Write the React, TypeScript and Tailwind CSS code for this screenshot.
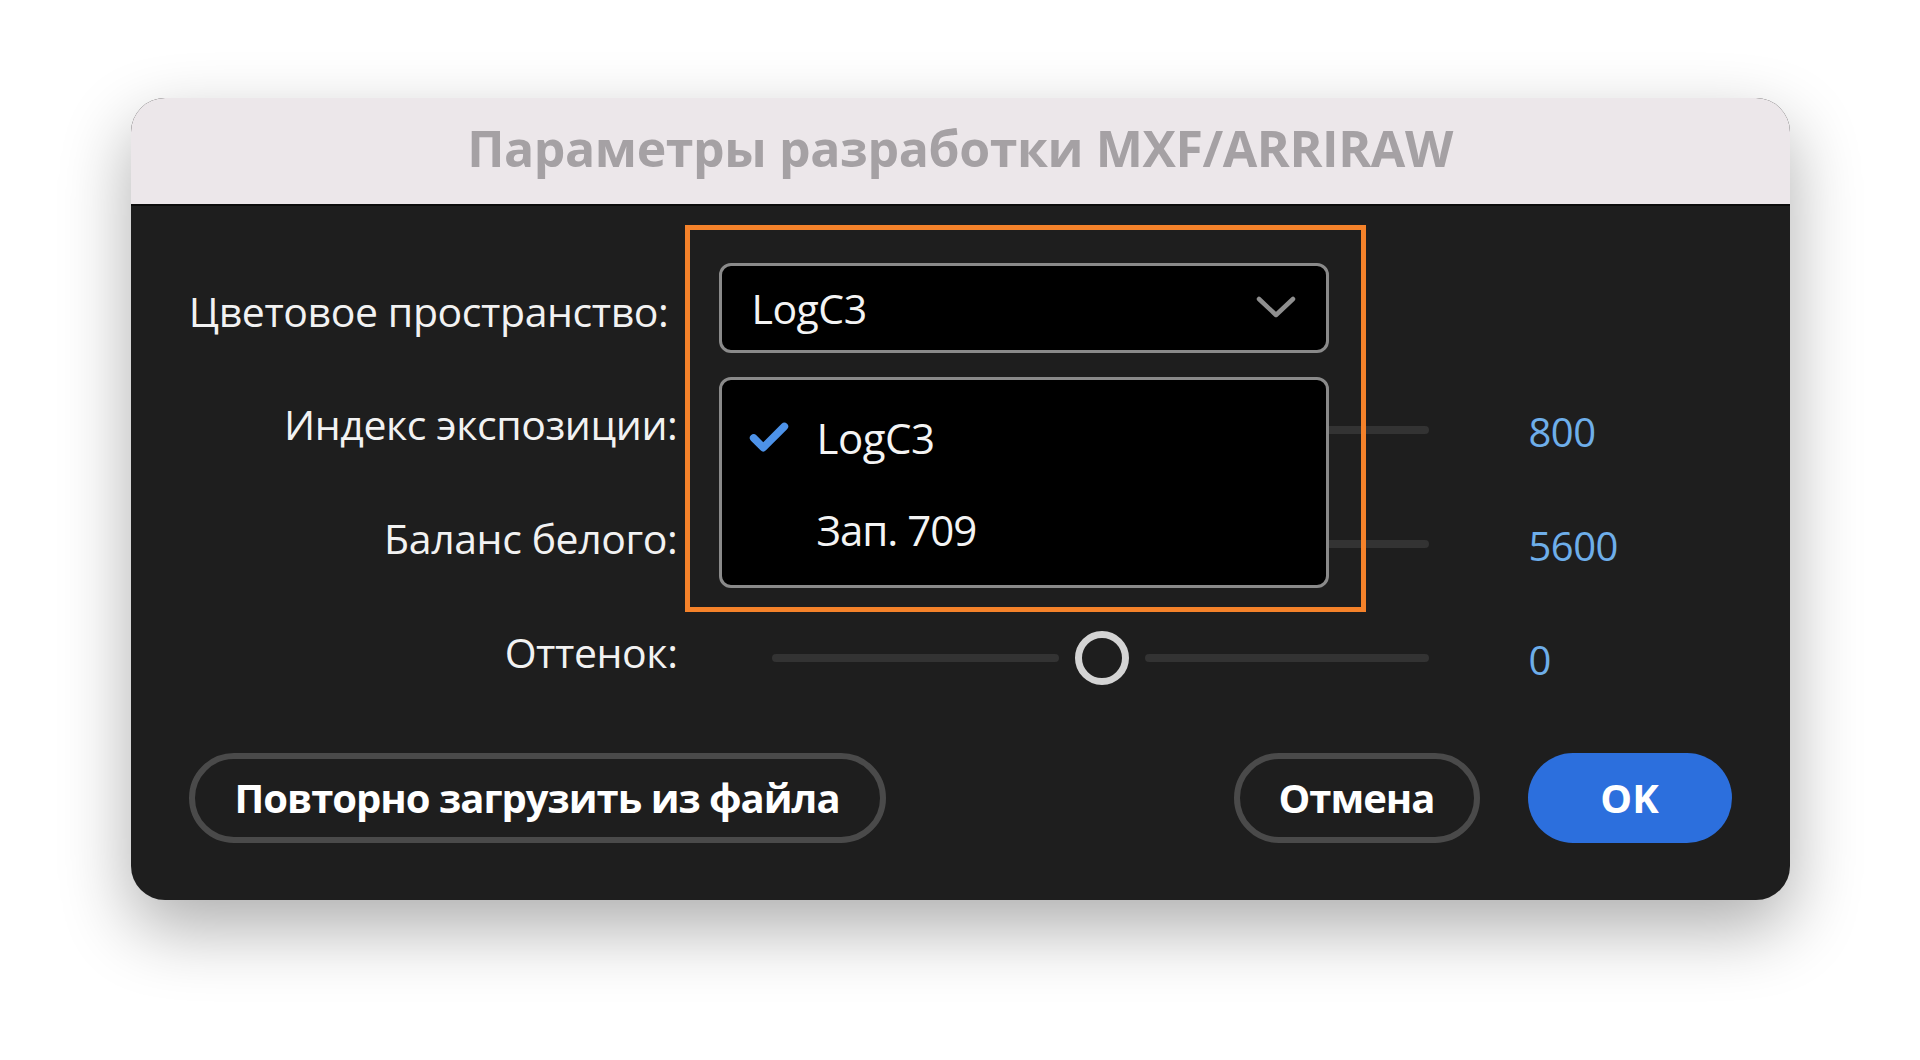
import { Check } from "lucide-react";

const font = { fontFamily: '"Open Sans", "Noto Sans", sans-serif' };

function Track({ thumb }: { thumb?: number }) {
  // thumb: px offset of the thumb centre from the track's left edge
  if (thumb === undefined) {
    return <div className="h-[8px] w-[657px] rounded-full bg-[#333333]" />;
  }
  return (
    <div className="flex w-[657px] items-center">
      <div className="h-[8px] rounded-full bg-[#333333]" style={{ width: thumb - 42 }} />
      <div className="mx-[16px] h-[54px] w-[54px] shrink-0 rounded-full border-[7px] border-[#d4d4d4] bg-[#1e1e1e]" />
      <div className="h-[8px] flex-1 rounded-full bg-[#333333]" />
    </div>
  );
}

function SliderRow({ label, value, thumb }: { label: string; value: string; thumb?: number }) {
  return (
    <div className="flex h-[114px] items-center">
      <div className="w-[489px] pb-[12px] text-right text-[41px] font-medium leading-none tracking-[-0.4px] text-[#f2f2f2]">
        {label}
      </div>
      <div className="ml-[94px]">
        <Track thumb={thumb} />
      </div>
      <div className="ml-[100px] pt-[4px] text-[40px] leading-none tracking-[-0.5px] text-[#6eaeea]">{value}</div>
    </div>
  );
}

export default function App() {
  const rows = [
    { label: "Индекс экспозиции:", value: "800" },
    { label: "Баланс белого:", value: "5600" },
    { label: "Оттенок:", value: "0", thumb: 329 },
  ];

  return (
    <div className="flex min-h-[1060px] w-full justify-center bg-white pt-[98px]" style={font}>
      <div className="h-[802px] w-[1659px] overflow-hidden rounded-[34px] bg-[#1e1e1e] shadow-[0_28px_70px_rgba(0,0,0,0.32)]">
        {/* title bar */}
        <div className="flex h-[108px] items-center justify-center border-b-2 border-[#0c0c0c] bg-[#ece7ea] pb-[6px]">
          <h1 className="text-[50px] font-bold leading-none tracking-[-0.4px] text-[#a5a1a4]">
            Параметры разработки MXF/ARRIRAW
          </h1>
        </div>

        <div className="px-[58px] pt-[57px] pb-[57px]">
          {/* colour space */}
          <div className="flex h-[90px] items-center">
            <div className="w-[489px] pr-[9px] pt-[6px] text-right text-[41px] font-medium leading-none tracking-[-0.4px] text-[#f2f2f2]">
              Цветовое пространство:
            </div>
            <div className="relative ml-[41px]">
              <div className="flex h-[90px] w-[610px] items-center justify-between rounded-[12px] border-[3px] border-[#8a8a8a] bg-black pl-[30px] pr-[30px]">
                <span className="text-[41px] leading-none tracking-[-0.5px] text-[#f4f4f4]">LogC3</span>
                <svg width="40" height="24" viewBox="0 0 40 24" fill="none">
                  <path d="M3 3 L20 19 L37 3" stroke="#8f8f8f" strokeWidth="4.5" strokeLinecap="round" strokeLinejoin="round" />
                </svg>
              </div>

              {/* open menu */}
              <div className="absolute left-0 top-[114px] z-10 flex h-[211px] w-[610px] flex-col rounded-[12px] border-[3px] border-[#8a8a8a] bg-black pt-[38px]">
                <div className="flex h-[40px] items-center">
                  <Check className="ml-[24px] h-[46px] w-[46px] text-[#4d92e8]" strokeWidth={4} />
                  <span className="ml-[25px] text-[42px] leading-none tracking-[-0.5px] text-[#f4f4f4]">LogC3</span>
                </div>
                <div className="mt-[52px] flex h-[40px] items-center">
                  <span className="ml-[95px] text-[42px] leading-none tracking-[-1px] text-[#f4f4f4]">Зап. 709</span>
                </div>
              </div>

              {/* highlight frame */}
              <div className="pointer-events-none absolute left-[-34px] top-[-38px] z-20 h-[387px] w-[681px] border-[5px] border-[#f5822a]" />
            </div>
          </div>

          <div className="mt-[20px]">
            {rows.map((r) => (
              <SliderRow key={r.label} label={r.label} value={r.value} thumb={r.thumb} />
            ))}
          </div>

          {/* buttons */}
          <div className="mt-[38px] flex items-center">
            <button className="flex h-[90px] w-[697px] items-center justify-center rounded-full border-[6px] border-[#4a4a4a] text-[40px] font-bold leading-none tracking-[-1px] text-white">
              Повторно загрузить из файла
            </button>
            <div className="ml-auto flex items-center gap-[48px]">
              <button className="flex h-[90px] w-[246px] items-center justify-center rounded-full border-[6px] border-[#4a4a4a] text-[40px] font-bold leading-none tracking-[-1px] text-white">
                Отмена
              </button>
              <button className="flex h-[90px] w-[204px] items-center justify-center rounded-full bg-[#2c6fdd] text-[40px] font-bold leading-none text-white">
                OK
              </button>
            </div>
          </div>
        </div>
      </div>
    </div>
  );
}
